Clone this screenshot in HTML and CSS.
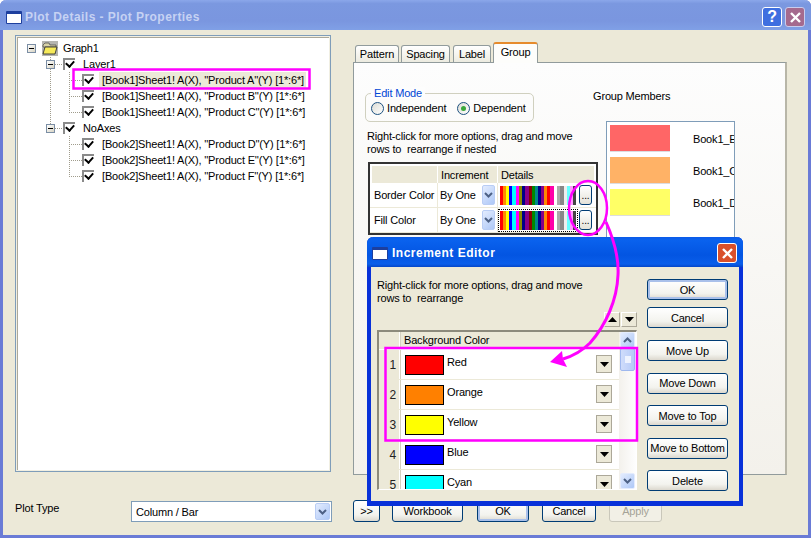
FILE: index.html
```html
<!DOCTYPE html>
<html lang="en">
<head>
    <meta charset="UTF-8">
    <title>Plot Details - Plot Properties</title>
    <link rel="stylesheet" href="styles.css">
</head>
<body>
    <div class="window">
        <div class="titlebar">
            <span class="title-icon"></span>
            <span class="title-text">Plot Details - Plot Properties</span>
            <span class="cap-btn cap-help">?</span>
            <span class="cap-btn cap-close cap-faded">
                <svg width="13" height="13" viewBox="0 0 13 13"><path d="M2 2 L11 11 M11 2 L2 11" stroke="#fff" stroke-width="2.4"/></svg>
            </span>
        </div>

        <div class="window-body">
            <div class="top">
                <!-- tree on the left -->
                <div class="tree">
                    <svg class="tree-lines" width="100" height="150">
                        <g stroke="#a09c8c" stroke-dasharray="1 1" fill="none">
                            <path d="M34.5 19 V92"/>
                            <path d="M53.5 36 V76 M53.5 100 V140"/>
                            <path d="M39 28.5 H47 M39 92.5 H47"/>
                            <path d="M53 44.5 H66 M53 60.5 H66 M53 76.5 H66 M53 108.5 H66 M53 124.5 H66 M53 140.5 H66"/>
                        </g>
                    </svg>
                    <div class="tree-row lvl0">
                        <span class="exp"></span>
                        <svg class="folder" width="16" height="15" viewBox="0 0 16 15">
                            <rect width="16" height="15" fill="#b5b5b0"/>
                            <path d="M1 4 L3 2 H7 L8 4 H14 V6 H1Z" fill="#d8d2a8" stroke="#444" stroke-width=".7"/>
                            <path d="M1 13 L3 6 H15 L13 13Z" fill="#f6ea5a" stroke="#333" stroke-width=".9"/>
                        </svg>
                        <span class="tree-label">Graph1</span>
                    </div>
                    <div class="tree-row lvl1"><span class="exp"></span><span class="chk"></span><span class="tree-label">Layer1</span></div>
                    <div class="tree-row lvl2"><span class="chk"></span><span class="tree-label leaf selected">[Book1]Sheet1! A(X), ''Product A''(Y) [1*:6*]</span></div>
                    <div class="tree-row lvl2"><span class="chk"></span><span class="tree-label leaf">[Book1]Sheet1! A(X), ''Product B''(Y) [1*:6*]</span></div>
                    <div class="tree-row lvl2"><span class="chk"></span><span class="tree-label leaf">[Book1]Sheet1! A(X), ''Product C''(Y) [1*:6*]</span></div>
                    <div class="tree-row lvl1"><span class="exp"></span><span class="chk"></span><span class="tree-label">NoAxes</span></div>
                    <div class="tree-row lvl2"><span class="chk"></span><span class="tree-label leaf">[Book2]Sheet1! A(X), ''Product D''(Y) [1*:6*]</span></div>
                    <div class="tree-row lvl2"><span class="chk"></span><span class="tree-label leaf">[Book2]Sheet1! A(X), ''Product E''(Y) [1*:6*]</span></div>
                    <div class="tree-row lvl2"><span class="chk"></span><span class="tree-label leaf">[Book2]Sheet1! A(X), ''Product F''(Y) [1*:6*]</span></div>
                </div>

                <!-- tabs on the right -->
                <div class="tabs-col">
                    <div class="tabs">
                        <span class="tab tab-pattern">Pattern</span>
                        <span class="tab tab-spacing">Spacing</span>
                        <span class="tab tab-label">Label</span>
                        <span class="tab tab-group">Group</span>
                    </div>
                    <div class="tab-panel">
                        <div class="panel-left">
                            <div class="groupbox">
                                <span class="legend">Edit Mode</span>
                                <label class="radio"><span class="radio-dot"></span>Independent</label>
                                <label class="radio"><span class="radio-dot on"></span>Dependent</label>
                            </div>
                            <p class="hint">Right-click for more options, drag and move<br>rows to&nbsp; rearrange if nested</p>
                            <div class="inc-table">
                                <div class="inc-row inc-head">
                                    <span class="c1"></span><span class="c2">Increment</span><span class="c3">Details</span>
                                </div>
                                <div class="inc-row">
                                    <span class="c1">Border Color</span>
                                    <span class="c2">By One<span class="combo-btn"><svg class="chev" viewBox="0 0 9 6"><path d="M1 1 L4.5 4.5 L8 1"/></svg></span></span>
                                    <span class="c3"><span class="strip"></span><span class="dots-btn">...</span></span>
                                </div>
                                <div class="inc-row">
                                    <span class="c1">Fill Color</span>
                                    <span class="c2">By One<span class="combo-btn"><svg class="chev" viewBox="0 0 9 6"><path d="M1 1 L4.5 4.5 L8 1"/></svg></span></span>
                                    <span class="c3"><span class="strip focus"></span><span class="dots-btn">...</span></span>
                                </div>
                            </div>
                        </div>
                        <div class="panel-right">
                            <div class="members-title">Group Members</div>
                            <div class="members">
                                <div class="member"><span class="member-swatch s-red"></span><span class="member-name">Book1_E</span></div>
                                <div class="member"><span class="member-swatch s-orange"></span><span class="member-name">Book1_C</span></div>
                                <div class="member"><span class="member-swatch s-yellow"></span><span class="member-name">Book1_D</span></div>
                            </div>
                        </div>
                    </div>
                </div>
            </div>

            <div class="bottom">
                <span class="plot-type">Plot Type</span>
                <div class="combo">Column / Bar<span class="combo-btn"><svg class="chev" viewBox="0 0 9 6"><path d="M1 1 L4.5 4.5 L8 1"/></svg></span></div>
                <button class="btn b-more">&gt;&gt;</button>
                <button class="btn b-workbook">Workbook</button>
                <button class="btn b-ok default">OK</button>
                <button class="btn b-cancel">Cancel</button>
                <button class="btn b-apply" disabled>Apply</button>
            </div>
        </div>
    </div>

    <!-- Increment Editor floats over the main window -->
    <div class="editor">
        <div class="editor-title">
            <span class="title-icon"></span>
            <span class="editor-title-text">Increment Editor</span>
            <span class="cap-btn cap-close">
                <svg width="13" height="13" viewBox="0 0 13 13"><path d="M2 2 L11 11 M11 2 L2 11" stroke="#fff" stroke-width="2.4"/></svg>
            </span>
        </div>
        <div class="editor-body">
            <div class="editor-left">
                <p class="editor-hint">Right-click for more options, drag and move<br>rows to&nbsp; rearrange</p>
                <div class="sort-btns">
                    <span class="sort-btn"><svg width="9" height="5" viewBox="0 0 9 5"><path d="M4.5 0 L9 5 H0Z"/></svg></span>
                    <span class="sort-btn"><svg width="9" height="5" viewBox="0 0 9 5"><path d="M0 0 H9 L4.5 5Z"/></svg></span>
                </div>
                <div class="grid">
                    <div class="grid-main">
                        <div class="grid-head"><span class="num"></span><span class="head-text">Background Color</span></div>
                        <div class="grid-row"><span class="num">1</span><span class="color-cell"><span class="swatch red"></span><span class="color-name">Red</span><span class="drop"><svg width="9" height="5" viewBox="0 0 9 5"><path d="M0 0 H9 L4.5 5Z"/></svg></span></span></div>
                        <div class="grid-row"><span class="num">2</span><span class="color-cell"><span class="swatch orange"></span><span class="color-name">Orange</span><span class="drop"><svg width="9" height="5" viewBox="0 0 9 5"><path d="M0 0 H9 L4.5 5Z"/></svg></span></span></div>
                        <div class="grid-row"><span class="num">3</span><span class="color-cell"><span class="swatch yellow"></span><span class="color-name">Yellow</span><span class="drop"><svg width="9" height="5" viewBox="0 0 9 5"><path d="M0 0 H9 L4.5 5Z"/></svg></span></span></div>
                        <div class="grid-row"><span class="num">4</span><span class="color-cell"><span class="swatch blue"></span><span class="color-name">Blue</span><span class="drop"><svg width="9" height="5" viewBox="0 0 9 5"><path d="M0 0 H9 L4.5 5Z"/></svg></span></span></div>
                        <div class="grid-row"><span class="num">5</span><span class="color-cell"><span class="swatch cyan"></span><span class="color-name">Cyan</span><span class="drop"><svg width="9" height="5" viewBox="0 0 9 5"><path d="M0 0 H9 L4.5 5Z"/></svg></span></span></div>
                    </div>
                    <div class="scrollbar">
                        <span class="sb-btn"><svg class="chev" viewBox="0 0 9 6"><path d="M1 5 L4.5 1.5 L8 5"/></svg></span>
                        <span class="sb-thumb"></span>
                        <span class="sb-space"></span>
                        <span class="sb-btn"><svg class="chev" viewBox="0 0 9 6"><path d="M1 1 L4.5 4.5 L8 1"/></svg></span>
                    </div>
                </div>
            </div>
            <div class="editor-right">
                <div class="btn-group-a">
                    <button class="btn default">OK</button>
                    <button class="btn">Cancel</button>
                </div>
                <div class="btn-group-b">
                    <button class="btn">Move Up</button>
                    <button class="btn">Move Down</button>
                    <button class="btn">Move to Top</button>
                    <button class="btn">Move to Bottom</button>
                    <button class="btn">Delete</button>
                </div>
            </div>
        </div>
    </div>

    <!-- magenta annotations -->
    <svg class="annot" width="811" height="538" viewBox="0 0 811 538">
        <g fill="none" stroke="#ff00ff">
            <rect x="73.5" y="69.5" width="236" height="19" stroke-width="2.5"/>
            <rect x="385.5" y="348" width="251.5" height="92.5" stroke-width="2.5"/>
            <ellipse cx="588" cy="208" rx="19" ry="27" stroke-width="2.5"/>
            <path d="M606 222 C614 240 619 258 618 275 C617 300 606 325 590 343 C582 351 573 356 563 359" stroke-width="3"/>
        </g>
        <path d="M550 362 L562 351 L563 359 L567 367Z" fill="#ff00ff"/>
    </svg>
</body>
</html>
```

FILE: styles.css
```css
* {
    box-sizing: border-box;
}
body {
    margin: 0;
    width: 811px;
    height: 538px;
    overflow: hidden;
    position: relative;
    font-family: "Liberation Sans", Arial, sans-serif;
    font-size: 11px;
    letter-spacing: -0.17px;
    color: #000;
    background: #fff;
}
p {
    margin: 0;
}

/* main window */
.window {
    height: 538px;
    display: flex;
    flex-direction: column;
    background: #ece9d8;
    border-left: 3px solid #6a7bd6;
    border-right: 3px solid #6a7bd6;
    border-bottom: 3px solid #6a7bd6;
    border-radius: 6px 6px 0 0;
}
.titlebar {
    height: 30px;
    margin: 0 -3px;
    padding: 4px 6px 0 6px;
    display: flex;
    align-items: center;
    background: linear-gradient(#8ba7ea 0, #7b98e0 12%, #7a96df 70%, #80a0e6 100%);
    border-radius: 6px 6px 0 0;
}
.title-icon {
    width: 16px;
    height: 13px;
    background: #fff;
    border: 1px solid #1d3f9e;
    border-top: 3px solid #1d3f9e;
    border-radius: 1px;
    flex: none;
}
.title-text {
    margin-left: 3px;
    flex: 1;
    font-weight: bold;
    font-size: 12px;
    letter-spacing: 0.45px;
    color: #c6d2f3;
}
.cap-btn {
    width: 20px;
    height: 20px;
    flex: none;
    border: 1px solid #fff;
    border-radius: 3px;
    display: flex;
    align-items: center;
    justify-content: center;
    color: #fff;
    font-weight: bold;
    font-size: 16px;
}
.cap-help {
    background: #3f6fe0;
    margin-right: 3px;
}
.cap-close {
    background: #d9502c;
}
.cap-faded {
    background: #a56a8e;
    border-color: #c8cdee;
}

.window-body {
    flex: 1;
    padding: 5px 21px 0 12px;
}
.top {
    display: flex;
    gap: 22px;
    height: 440px;
}

/* tree */
.tree {
    position: relative;
    width: 316px;
    height: 437px;
    padding: 4px 0 0 11px;
    background: #fff;
    border: 1px solid #7f9db9;
    box-shadow: inset 1px 1px 0 #f1efe2, inset -1px -1px 0 #f1efe2, inset 2px 2px 0 #aca899, inset -2px -2px 0 #fff;
}
.tree-lines {
    position: absolute;
    left: 0;
    top: 0;
}
.tree-row {
    position: relative;
    height: 16px;
    display: flex;
    align-items: center;
    white-space: nowrap;
}
.lvl1 {
    padding-left: 19px;
}
.lvl2 {
    padding-left: 55px;
}
.exp {
    width: 9px;
    height: 9px;
    border: 1px solid #7b8ea5;
    background: linear-gradient(135deg, #fff, #d8d4c4);
    position: relative;
    flex: none;
}
.exp::after {
    content: "";
    position: absolute;
    left: 1px;
    top: 3px;
    width: 5px;
    height: 1px;
    background: #000;
}
.folder {
    margin-left: 6px;
    flex: none;
}
.chk {
    width: 12px;
    height: 12px;
    margin-left: 8px;
    flex: none;
    position: relative;
    border-top: 2px solid #8a8a8a;
    border-left: 2px solid #8a8a8a;
    background: #fff;
}
.lvl2 .chk {
    margin-left: 0;
}
.chk::after {
    content: "";
    position: absolute;
    left: 1px;
    top: 0;
    width: 6px;
    height: 4px;
    border-left: 2px solid #000;
    border-bottom: 2px solid #000;
    transform: rotate(-48deg);
}
.tree-label {
    margin-left: 5px;
    line-height: 16px;
}
.lvl1 .tree-label {
    margin-left: 8px;
}
.lvl2 .tree-label.leaf {
    margin-left: 8px;
}
.lvl2 .tree-label.selected {
    background: #ece9d8;
    margin-left: 5px;
    padding: 0 2px 0 3px;
    height: 16px;
}

/* tabs */
.tabs-col {
    width: 434px;
    padding-top: 7px;
}
.tabs {
    height: 20px;
    padding-left: 2px;
    display: flex;
    align-items: flex-end;
}
.tab {
    height: 17px;
    margin-right: 2px;
    border: 1px solid #919b9c;
    border-bottom: none;
    border-radius: 3px 3px 0 0;
    background: linear-gradient(#fff, #ecebe0);
    text-align: center;
    line-height: 16px;
}
.tab-pattern {
    width: 44px;
}
.tab-spacing {
    width: 49px;
    margin-right: 3px;
}
.tab-label {
    width: 38px;
}
.tab-group {
    width: 45px;
    height: 21px;
    margin-bottom: -1px;
    position: relative;
    background: #fdfdfb;
    border-top: 2px solid #e68b2c;
    line-height: 16px;
}
.tab-panel {
    height: 413px;
    display: flex;
    border: 1px solid #919b9c;
    border-right: 2px solid #b8b6a8;
    background: linear-gradient(#fdfdfd, #f3f1eb);
}
.panel-left {
    width: 239px;
    padding: 30px 0 0 11px;
}
.panel-right {
    padding-top: 26px;
}
.groupbox {
    position: relative;
    width: 169px;
    height: 29px;
    padding: 7px 0 0 5px;
    display: flex;
    gap: 11px;
    border: 1px solid #d0d0bf;
    border-radius: 5px;
}
.legend {
    position: absolute;
    left: 5px;
    top: -7px;
    padding: 0 3px;
    background: #fdfdfd;
    color: #0046d5;
}
.radio {
    display: flex;
    align-items: center;
    gap: 3px;
    height: 14px;
    white-space: nowrap;
}
.radio-dot {
    width: 13px;
    height: 13px;
    border-radius: 50%;
    border: 1px solid #1c5180;
    background: linear-gradient(135deg, #dcdcd5, #fff);
    display: flex;
    align-items: center;
    justify-content: center;
}
.radio-dot.on::after {
    content: "";
    width: 5px;
    height: 5px;
    border-radius: 50%;
    background: #3aa83a;
}
.hint {
    margin: 8px 0 0 2px;
    line-height: 13px;
    white-space: nowrap;
}
.inc-table {
    width: 230px;
    margin: 6px 0 0 3px;
    border: 2px solid #333;
    background: #fff;
}
.inc-row {
    display: flex;
    height: 25px;
    border-bottom: 1px solid #ece9d8;
    align-items: stretch;
    white-space: nowrap;
}
.inc-head {
    height: 19px;
    background: #ece9d8;
    border: 2px solid #fff;
    border-bottom: none;
}
.inc-row .c1 {
    width: 68px;
    padding-left: 4px;
    display: flex;
    align-items: center;
    border-right: 1px solid #ece9d8;
}
.inc-row .c2 {
    width: 60px;
    padding-left: 2px;
    display: flex;
    align-items: center;
    justify-content: space-between;
    border-right: 1px solid #ece9d8;
}
.inc-row .c3 {
    flex: 1;
    padding: 0 2px 0 2px;
    display: flex;
    align-items: center;
}
.inc-head .c1, .inc-head .c2, .inc-head .c3 {
    border-right: 1px solid #fff;
}
.inc-head .c1 {
    width: 66px;
}
.inc-head .c2 {
    padding-left: 3px;
}
.inc-head .c3 {
    padding-left: 3px;
    border-right: none;
}
.combo-btn {
    width: 13px;
    height: 20px;
    margin-right: 2px;
    display: flex;
    align-items: center;
    justify-content: center;
    flex: none;
    border: 1px solid #b9cdf5;
    border-radius: 2px;
    background: linear-gradient(135deg, #e3ecfe, #aec8f7);
}
.chev {
    width: 9px;
    height: 6px;
    fill: none;
    stroke: #4d6185;
    stroke-width: 2;
}
.strip {
    width: 76px;
    height: 19px;
    flex: none;
    background: linear-gradient(90deg,
        #f00 0 3px, #f80 3px 6px, #ff0 6px 9px, #00f 9px 12px, #0ff 12px 16px, #f0f 16px 19px,
        #880 19px 22px, #008 22px 25px, #808 25px 29px, #800 29px 32px, #080 32px 35px, #088 35px 38px,
        #008 38px 41px, #808 41px 44px, #f80 44px 47px, #f00 47px 50px, #f0a 50px 54px, #fff 54px 57px,
        #aaa 57px 60px, #888 60px 64px, #eee 64px 67px, #6ff 67px 70px, #f9f 70px 73px, #444 73px 76px);
}
.strip.focus {
    outline: 1px dotted #000;
    outline-offset: 1px;
}
.dots-btn {
    width: 13px;
    height: 20px;
    margin-left: 3px;
    flex: none;
    position: relative;
    border: 1px solid #003c74;
    border-radius: 3px;
    background: linear-gradient(#fff, #e4e2d8);
    text-align: center;
    line-height: 20px;
    font-size: 10px;
}

/* group members */
.members-title {
    line-height: 14px;
    white-space: nowrap;
}
.members {
    width: 129px;
    height: 350px;
    margin: 18px 0 0 13px;
    padding: 3px;
    overflow: hidden;
    border: 1px solid #7f9db9;
    background: #fff;
}
.member {
    display: flex;
    align-items: center;
    height: 27px;
    margin-bottom: 5px;
    white-space: nowrap;
}
.member-swatch {
    width: 60px;
    height: 27px;
    flex: none;
    border-bottom: 1px solid #ddd;
}
.s-red {
    background: #ff6666;
}
.s-orange {
    background: #ffb266;
}
.s-yellow {
    background: #ffff66;
}
.member-name {
    margin-left: 23px;
}

/* bottom bar */
.bottom {
    position: relative;
    margin-top: 26px;
    display: flex;
    align-items: flex-start;
}
.plot-type {
    width: 116px;
    padding-top: 1px;
}
.combo {
    width: 201px;
    height: 21px;
    padding: 0 1px 0 4px;
    display: flex;
    align-items: center;
    justify-content: space-between;
    background: #fff;
    border: 1px solid #7f9db9;
}
.combo .combo-btn {
    width: 15px;
    height: 17px;
    margin-right: 0;
}
.btn {
    height: 21px;
    padding: 0;
    font: inherit;
    letter-spacing: inherit;
    color: #000;
    border: 1px solid #003c74;
    border-radius: 3px;
    background: linear-gradient(#fff 0, #f3f3ee 70%, #dcd8ce 100%);
    white-space: nowrap;
}
.btn.default {
    box-shadow: inset 0 0 0 2px #a9c0ea;
}
.btn:disabled {
    color: #a5a397;
    border-color: #c9c7ba;
    background: #f2f0e6;
}
.bottom .btn {
    height: 22px;
    margin-top: -1px;
}
.b-more {
    width: 27px;
    margin-left: 21px;
}
.b-workbook {
    width: 71px;
    margin-left: 12px;
}
.b-ok {
    width: 52px;
    margin-left: 14px;
}
.b-cancel {
    width: 54px;
    margin-left: 13px;
}
.b-apply {
    width: 53px;
    margin-left: 13px;
}

/* increment editor */
.editor {
    position: absolute;
    left: 367px;
    top: 237px;
    width: 376px;
    height: 269px;
    display: flex;
    flex-direction: column;
    background: #ece9d8;
    border: 4px solid #0831d9;
    border-top: none;
    border-bottom-width: 5px;
    border-radius: 6px 6px 0 0;
}
.editor-title {
    height: 30px;
    margin: 0 -4px;
    padding: 2px 6px 0 5px;
    display: flex;
    align-items: center;
    border-radius: 6px 6px 0 0;
    background: linear-gradient(#0a5ae8 0, #0a62ee 10%, #0355e2 60%, #0a5eea 90%, #0546c8 100%);
}
.editor-title-text {
    flex: 1;
    margin-left: 4px;
    color: #fff;
    font-weight: bold;
    font-size: 12px;
    letter-spacing: 0.5px;
}
.editor-body {
    flex: 1;
    display: flex;
    padding: 12px 0 0 6px;
}
.editor-left {
    width: 260px;
}
.editor-hint {
    line-height: 13px;
    white-space: nowrap;
}
.sort-btns {
    margin-top: 7px;
    display: flex;
    justify-content: flex-end;
    gap: 1px;
}
.sort-btn {
    width: 16px;
    height: 15px;
    display: flex;
    align-items: center;
    justify-content: center;
    background: #ece9d8;
    border-top: 1px solid #fff;
    border-left: 1px solid #fff;
    border-right: 1px solid #aca899;
    border-bottom: 1px solid #aca899;
}
.grid {
    height: 160px;
    margin-top: 3px;
    display: flex;
    overflow: hidden;
    background: #fff;
    border: 2px solid #8c8a7c;
    border-right: 1px solid #fff;
    border-bottom: 1px solid #fff;
}
.grid-main {
    flex: 1;
    overflow: hidden;
}
.grid-head {
    display: flex;
    height: 18px;
    line-height: 17px;
    background: #ece9d8;
    border-bottom: 1px solid #fff;
}
.num {
    width: 21px;
    flex: none;
    display: flex;
    align-items: center;
    justify-content: flex-end;
    padding-right: 3px;
    background: #ece9d8;
    border-right: 1px solid #fff;
    font-size: 12px;
    color: #222;
}
.head-text {
    padding-left: 3px;
    border-left: 1px solid #d4d0c0;
}
.grid-row {
    display: flex;
    height: 30px;
    border-bottom: 1px solid #ece9d8;
}
.color-cell {
    flex: 1;
    display: flex;
    padding: 5px 7px 0 4px;
    border-left: 1px solid #d4d0c0;
}
.swatch {
    width: 39px;
    height: 20px;
    flex: none;
    border: 1px solid #000;
}
.red {
    background: #f00;
}
.orange {
    background: #ff8000;
}
.yellow {
    background: #ff0;
}
.blue {
    background: #00f;
}
.cyan {
    background: #0ff;
}
.color-name {
    flex: 1;
    margin-left: 3px;
    line-height: 14px;
}
.drop {
    width: 16px;
    height: 18px;
    display: flex;
    align-items: center;
    justify-content: center;
    background: #ece9d8;
    border: 1px solid #aca899;
}
.scrollbar {
    width: 17px;
    padding: 0 1px;
    flex: none;
    display: flex;
    flex-direction: column;
    background: linear-gradient(90deg, #f3f1ec, #fefefe);
}
.sb-btn {
    height: 16px;
    display: flex;
    align-items: center;
    justify-content: center;
    flex: none;
    border: 1px solid #e4ecfd;
    border-radius: 2px;
    background: linear-gradient(135deg, #e3ecfe, #aec8f7);
}
.sb-thumb {
    height: 23px;
    flex: none;
    border: 1px solid #9fb8ee;
    border-radius: 2px;
    background: linear-gradient(#eef3ff, #eef3ff) center / 6px 7px no-repeat,
        linear-gradient(90deg, #cfdcfb, #b6cbf8);
}
.sb-space {
    flex: 1;
}
.editor-right {
    width: 81px;
    margin-left: 10px;
}
.editor-right .btn {
    width: 81px;
}
.btn-group-a, .btn-group-b {
    display: flex;
    flex-direction: column;
}
.btn-group-a {
    gap: 7px;
    margin-bottom: 12px;
}
.btn-group-b {
    gap: 11.5px;
}

.annot {
    position: absolute;
    left: 0;
    top: 0;
}
```
